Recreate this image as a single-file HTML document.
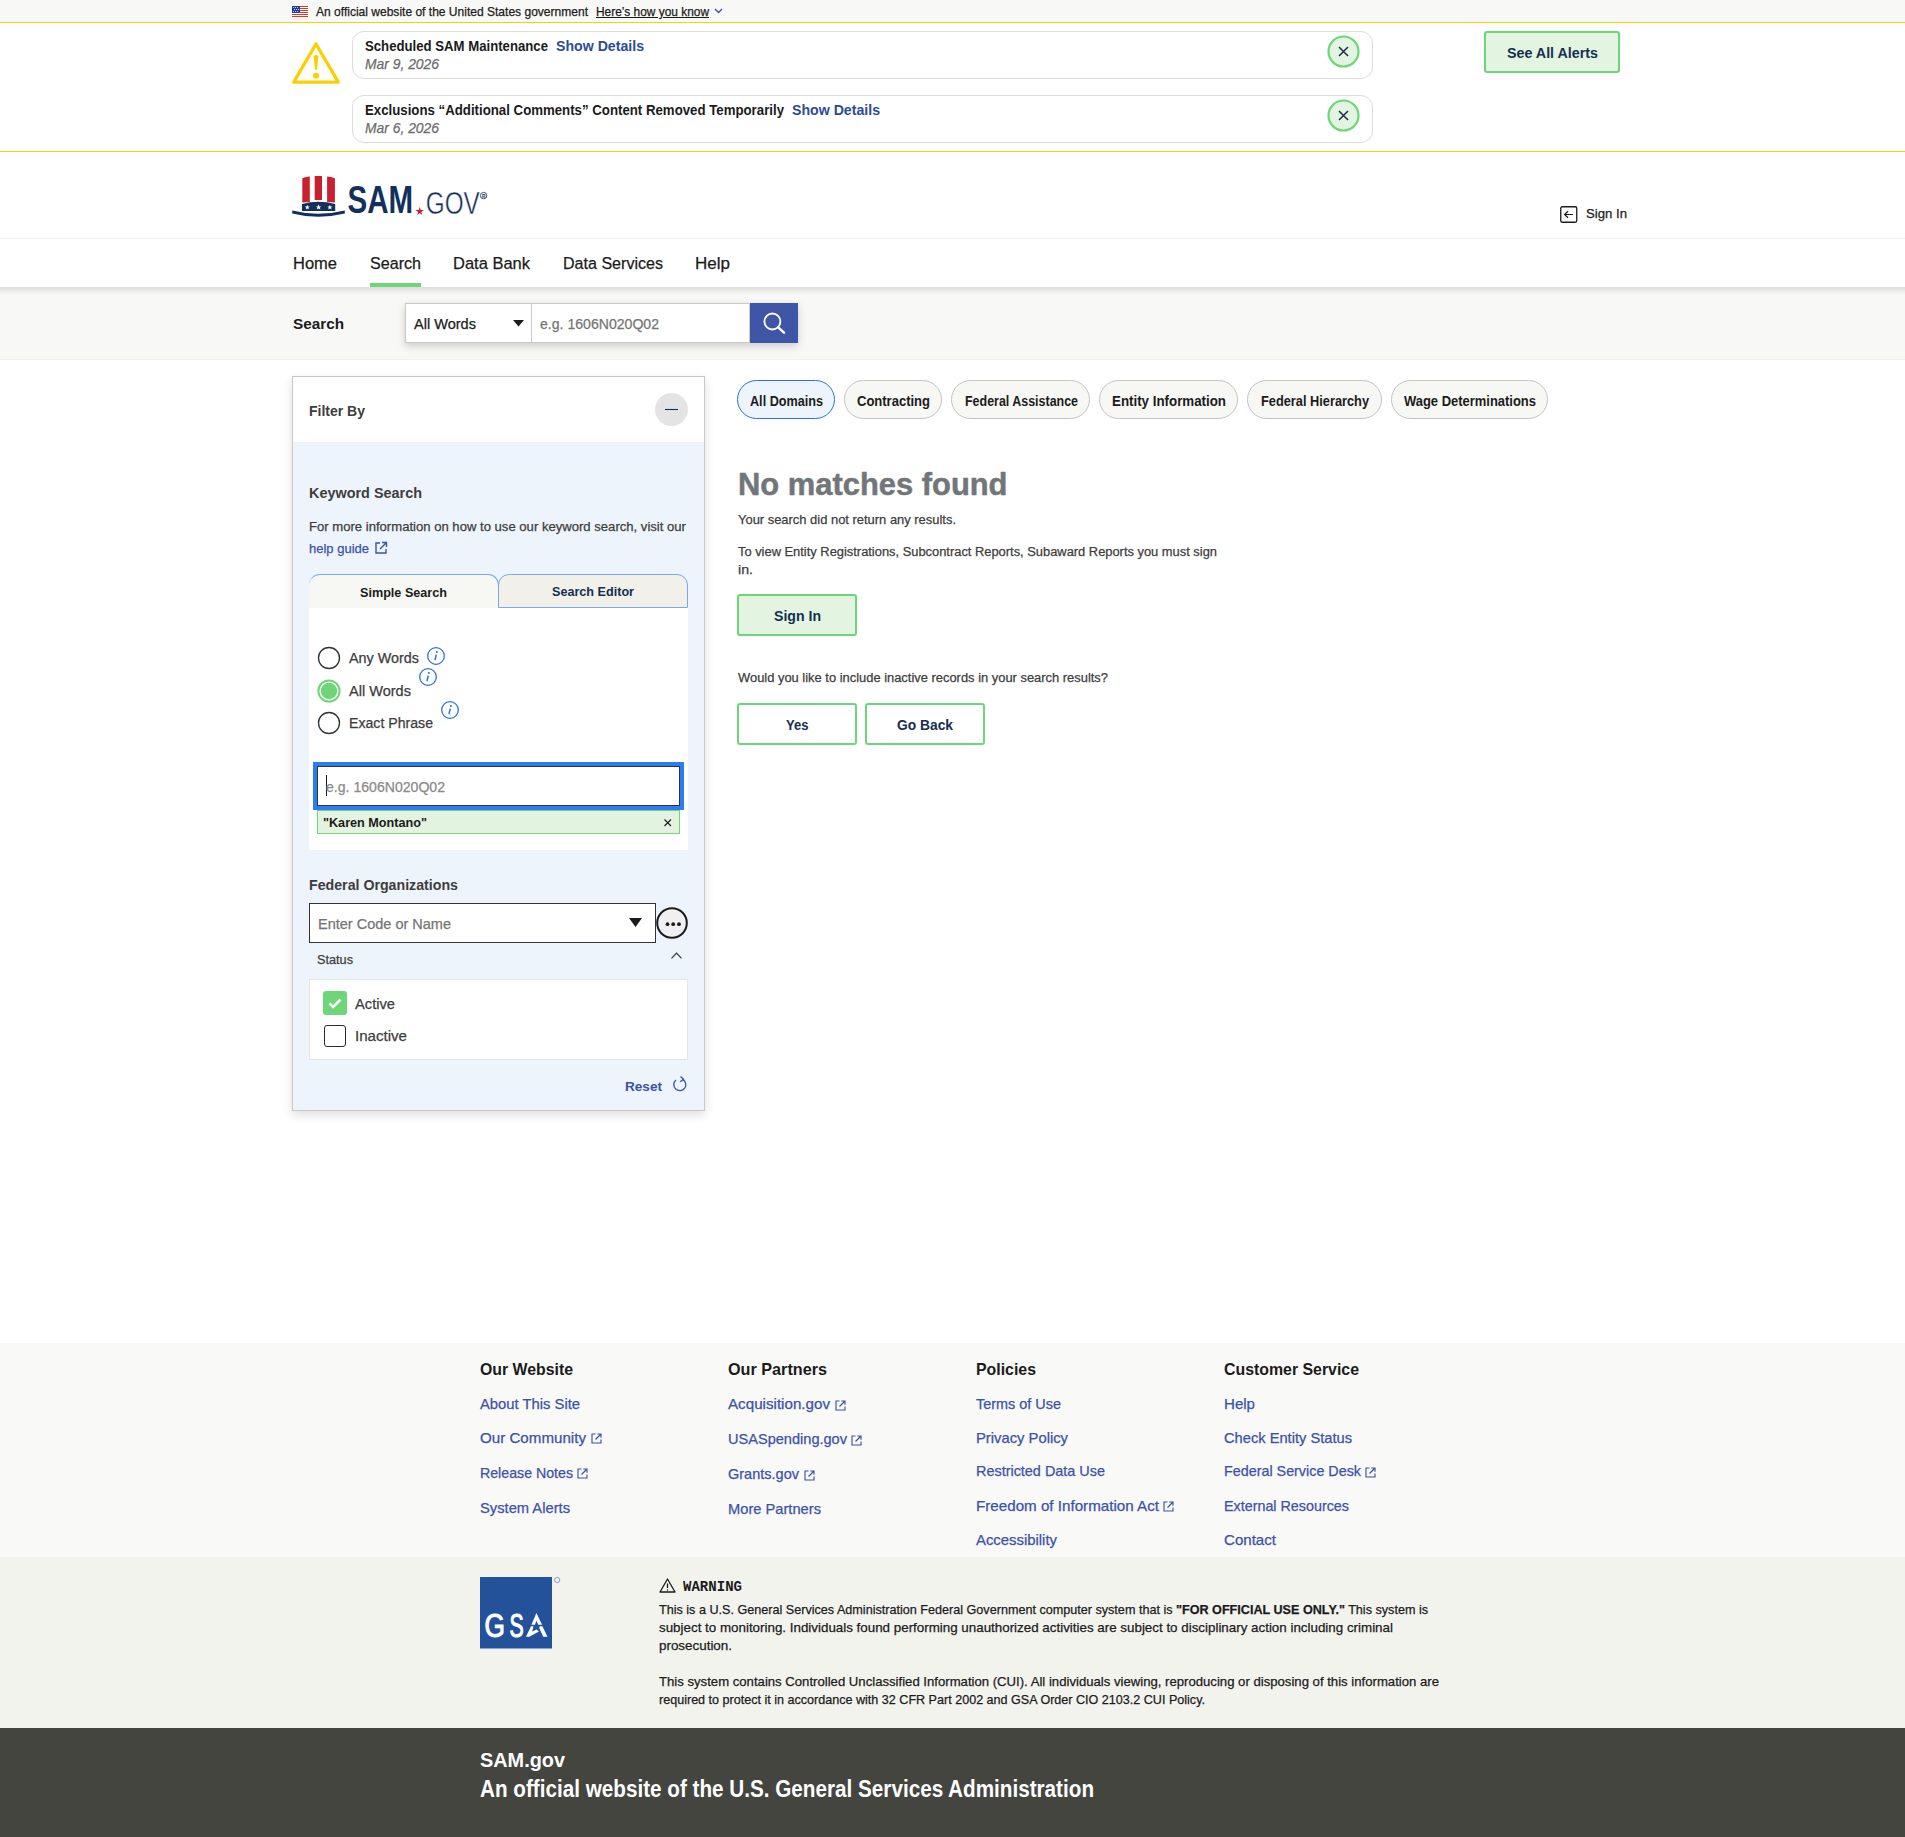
<!DOCTYPE html><html><head><meta charset="utf-8"><title>SAM.gov Search</title><style>
*{margin:0;padding:0;box-sizing:border-box}
html,body{width:1905px;height:1837px;overflow:hidden;background:#fff;font-family:"Liberation Sans",sans-serif;position:relative}
.t{position:absolute;line-height:1;white-space:nowrap}
.n{-webkit-text-stroke:0.25px currentColor}
.m{display:inline-block;width:0;height:0}
.b{position:absolute}
svg{position:absolute;overflow:visible}
</style></head><body>
<div class="b" style="left:0px;top:0px;width:1905px;height:22px;background:#f8f8f6"></div>
<div class="b" style="left:0px;top:22px;width:1905px;height:1px;background:#fbd000"></div>
<div class="b" style="left:0px;top:151px;width:1905px;height:1px;background:#fbd000"></div>
<div class="b" style="left:0px;top:238px;width:1905px;height:1px;background:#efefec"></div>
<div class="b" style="left:0px;top:287px;width:1905px;height:73px;background:#f8f8f6;border-bottom:1px solid #f1f1ed"></div>
<div class="b" style="left:0px;top:287px;width:1905px;height:8px;background:linear-gradient(#dcdcdb,#f8f8f6)"></div>
<div class="b" style="left:0px;top:1343px;width:1905px;height:214px;background:#f9f9f7"></div>
<div class="b" style="left:0px;top:1557px;width:1905px;height:171px;background:#f3f3ee"></div>
<div class="b" style="left:0px;top:1728px;width:1905px;height:109px;background:#45453f"></div>
<svg style="left:292px;top:6px" width="16" height="11" viewBox="0 0 16 11">
<rect width="16" height="11" fill="#fff"/>
<g fill="#d83b26"><rect y="0" width="16" height="1"/><rect y="2" width="16" height="1"/><rect y="4" width="16" height="1"/><rect y="6" width="16" height="1"/><rect y="8" width="16" height="1"/><rect y="10" width="16" height="1"/></g>
<rect width="8" height="7" fill="#1e3ca3"/>
<g fill="#fff"><circle cx="1.5" cy="1.5" r=".5"/><circle cx="3.5" cy="1.5" r=".5"/><circle cx="5.5" cy="1.5" r=".5"/><circle cx="2.5" cy="3.5" r=".5"/><circle cx="4.5" cy="3.5" r=".5"/><circle cx="6.5" cy="3.5" r=".5"/><circle cx="1.5" cy="5.5" r=".5"/><circle cx="3.5" cy="5.5" r=".5"/><circle cx="5.5" cy="5.5" r=".5"/></g>
</svg>
<div id="t0" class="t n " style="left:316px;top:6.012px;font-size:12.63px;font-weight:normal;color:#1b1b1b;font-style:normal;transform:scaleX(0.9530);transform-origin:0 0;">An official website of the United States government<i class="m"></i></div>
<div id="t1" class="t n " style="left:596px;top:6.012px;font-size:12.63px;font-weight:normal;color:#1b1b1b;font-style:normal;text-decoration:underline;transform:scaleX(0.9435);transform-origin:0 0;">Here’s how you know<i class="m"></i></div>
<svg style="left:714px;top:8px" width="9" height="6" viewBox="0 0 9 6"><path d="M1 1 L4.5 4.5 L8 1" fill="none" stroke="#3b52a8" stroke-width="1.4"/></svg>
<svg style="left:292px;top:42px" width="48" height="42" viewBox="0 0 48 42">
<path d="M24 2 L46.3 40.2 L1.7 40.2 Z" fill="none" stroke="#fbd000" stroke-width="3.3" stroke-linejoin="round"/>
<path d="M21.6 14.2 Q24 12 26.4 14.2 L25.1 27.3 Q24 28.5 22.9 27.3 Z" fill="#fbd000"/>
<circle cx="24" cy="33.7" r="3" fill="#fbd000"/>
</svg>
<div class="b" style="left:352px;top:31px;width:1021px;height:48px;border:1.5px solid #dcdcdc;border-radius:12px;background:#fff"></div>
<div id="t2" class="t " style="left:365px;top:38.606px;font-size:14.49px;font-weight:bold;color:#1b1b1b;font-style:normal;transform:scaleX(0.9095);transform-origin:0 0;">Scheduled SAM Maintenance<i class="m"></i></div>
<div id="t3" class="t " style="left:556px;top:38.612px;font-size:14.52px;font-weight:bold;color:#2c4b9a;font-style:normal;transform:scaleX(0.9741);transform-origin:0 0;">Show Details<i class="m"></i></div>
<div id="t4" class="t n " style="left:365px;top:55.613px;font-size:14.98px;font-weight:normal;color:#6b6b6b;font-style:italic;transform:scaleX(0.9263);transform-origin:0 0;">Mar 9, 2026<i class="m"></i></div>
<svg style="left:1327px;top:35px" width="33" height="33" viewBox="0 0 33 33">
<circle cx="16.5" cy="16.5" r="15" fill="#e3f5e1" stroke="#6dd679" stroke-width="2.2"/>
<path d="M12 12 L21 21 M21 12 L12 21" stroke="#1c2c4f" stroke-width="1.5"/>
</svg>
<div class="b" style="left:352px;top:95px;width:1021px;height:48px;border:1.5px solid #dcdcdc;border-radius:12px;background:#fff"></div>
<div id="t5" class="t " style="left:365px;top:102.606px;font-size:14.49px;font-weight:bold;color:#1b1b1b;font-style:normal;transform:scaleX(0.9139);transform-origin:0 0;">Exclusions “Additional Comments” Content Removed Temporarily<i class="m"></i></div>
<div id="t6" class="t " style="left:792px;top:102.612px;font-size:14.52px;font-weight:bold;color:#2c4b9a;font-style:normal;transform:scaleX(0.9741);transform-origin:0 0;">Show Details<i class="m"></i></div>
<div id="t7" class="t n " style="left:365px;top:119.613px;font-size:14.98px;font-weight:normal;color:#6b6b6b;font-style:italic;transform:scaleX(0.9263);transform-origin:0 0;">Mar 6, 2026<i class="m"></i></div>
<svg style="left:1327px;top:99px" width="33" height="33" viewBox="0 0 33 33">
<circle cx="16.5" cy="16.5" r="15" fill="#e3f5e1" stroke="#6dd679" stroke-width="2.2"/>
<path d="M12 12 L21 21 M21 12 L12 21" stroke="#1c2c4f" stroke-width="1.5"/>
</svg>
<div class="b" style="left:1484px;top:31px;width:136px;height:42px;border:2px solid #6dd679;border-radius:3px;background:#e3f5e1"></div>
<div id="t8" class="t " style="left:1507px;top:45.506px;font-size:14.52px;font-weight:bold;color:#162e51;font-style:normal;transform:scaleX(0.9836);transform-origin:0 0;">See All Alerts<i class="m"></i></div>
<svg style="left:288px;top:170px" width="210" height="52" viewBox="0 0 210 52">
<g fill="#c8202f">
<path d="M14.3 8.3 Q18 6.8 21.8 6.6 L21.8 32 L14.3 32.5 Z"/>
<path d="M26.7 6 L34 6 L34 30 L26.7 30 Z"/>
<path d="M39.1 6.6 Q43 6.8 46.9 8.3 L46.9 32.5 L39.1 32 Z"/>
</g>
<path d="M14 34 Q30.5 29.5 47.2 34 L47.2 41 L14 41 Z" fill="#12305a"/>
<g fill="#fff">
<path d="M19.3 34.8 L20 36.6 L21.8 36.6 L20.4 37.7 L20.9 39.4 L19.3 38.4 L17.7 39.4 L18.2 37.7 L16.8 36.6 L18.6 36.6 Z"/>
<path d="M30.6 34.3 L31.4 36.4 L33.5 36.4 L31.8 37.6 L32.4 39.6 L30.6 38.4 L28.8 39.6 L29.4 37.6 L27.7 36.4 L29.8 36.4 Z"/>
<path d="M41.9 34.8 L42.6 36.6 L44.4 36.6 L43 37.7 L43.5 39.4 L41.9 38.4 L40.3 39.4 L40.8 37.7 L39.4 36.6 L41.2 36.6 Z"/>
</g>
<path d="M4.2 40.5 Q30 47 56.8 40.5 L56.8 43.5 Q30 50 4.2 43.5 Z" fill="#12305a"/>
<text x="59.5" y="42.8" font-family="Liberation Sans" font-weight="bold" font-size="39.5" fill="#12305a" textLength="65.6" lengthAdjust="spacingAndGlyphs">SAM</text>
<path d="M131.7 37 L132.7 40 L135.9 40 L133.3 41.9 L134.3 44.9 L131.7 43 L129.1 44.9 L130.1 41.9 L127.5 40 L130.7 40 Z" fill="#c8202f"/>
<text x="137.8" y="43.8" font-family="Liberation Sans" font-size="31" fill="#12305a" textLength="54" lengthAdjust="spacingAndGlyphs" stroke="#fff" stroke-width="0.45">GOV</text>
<circle cx="195.6" cy="25.6" r="3.2" fill="none" stroke="#12305a" stroke-width="0.8"/>
<text x="193.9" y="27.5" font-family="Liberation Sans" font-size="5" font-weight="bold" fill="#12305a">R</text>
</svg>
<svg style="left:1560px;top:206px" width="18" height="17" viewBox="0 0 18 17">
<rect x="0.75" y="0.75" width="16" height="15.5" rx="1.5" fill="none" stroke="#1b1b1b" stroke-width="1.3"/>
<path d="M13 8.5 L5 8.5 M8 5.2 L4.6 8.5 L8 11.8" fill="none" stroke="#1b1b1b" stroke-width="1.2"/>
</svg>
<div id="t9" class="t n " style="left:1586px;top:207.008px;font-size:13.17px;font-weight:normal;color:#1b1b1b;font-style:normal;transform:scaleX(1.0008);transform-origin:0 0;">Sign In<i class="m"></i></div>
<div id="t10" class="t n " style="left:292.6px;top:256.013px;font-size:16.8px;font-weight:normal;color:#1b1b1b;font-style:normal;transform:scaleX(0.9829);transform-origin:0 0;">Home<i class="m"></i></div>
<div id="t11" class="t n " style="left:370px;top:256.013px;font-size:16.8px;font-weight:normal;color:#1b1b1b;font-style:normal;transform:scaleX(0.9592);transform-origin:0 0;">Search<i class="m"></i></div>
<div id="t12" class="t n " style="left:453px;top:256.013px;font-size:16.8px;font-weight:normal;color:#1b1b1b;font-style:normal;transform:scaleX(0.9827);transform-origin:0 0;">Data Bank<i class="m"></i></div>
<div id="t13" class="t n " style="left:563px;top:256.013px;font-size:16.8px;font-weight:normal;color:#1b1b1b;font-style:normal;transform:scaleX(0.9572);transform-origin:0 0;">Data Services<i class="m"></i></div>
<div id="t14" class="t n " style="left:695px;top:256.013px;font-size:16.8px;font-weight:normal;color:#1b1b1b;font-style:normal;transform:scaleX(1.0140);transform-origin:0 0;">Help<i class="m"></i></div>
<div class="b" style="left:370px;top:283px;width:51px;height:4px;background:#6dd679"></div>
<div id="t15" class="t " style="left:293px;top:316.010px;font-size:15.29px;font-weight:bold;color:#1b1b1b;font-style:normal;transform:scaleX(1.0003);transform-origin:0 0;">Search<i class="m"></i></div>
<div class="b" style="left:405px;top:303px;width:393px;height:40px;box-shadow:0 3px 8px rgba(0,0,0,0.18)"></div>
<div class="b" style="left:405px;top:303px;width:127px;height:40px;background:#fff;border:1px solid #c9c9c9"></div>
<div id="t16" class="t n " style="left:414px;top:317.012px;font-size:14.55px;font-weight:normal;color:#1b1b1b;font-style:normal;transform:scaleX(1.0003);transform-origin:0 0;">All Words<i class="m"></i></div>
<svg style="left:513px;top:320px" width="11" height="7" viewBox="0 0 11 7"><path d="M0 0 L11 0 L5.5 6.5 Z" fill="#1b1b1b"/></svg>
<div class="b" style="left:531px;top:303px;width:219px;height:40px;background:#fff;border:1px solid #c9c9c9"></div>
<div id="t17" class="t n " style="left:540px;top:317.003px;font-size:14.08px;font-weight:normal;color:#757575;font-style:normal;transform:scaleX(1.0001);transform-origin:0 0;">e.g. 1606N020Q02<i class="m"></i></div>
<div class="b" style="left:750px;top:303px;width:48px;height:40px;background:#3f56a6"></div>
<svg style="left:762px;top:311px" width="25" height="25" viewBox="0 0 25 25">
<circle cx="10.4" cy="10.5" r="8" fill="none" stroke="#fff" stroke-width="1.8"/>
<path d="M16.2 16.4 L22 21.6" stroke="#fff" stroke-width="2.5" stroke-linecap="round"/>
</svg>
<div class="b" style="left:292px;top:376px;width:413px;height:735px;border:1px solid #c8c8c8;background:#edf4fb;box-shadow:0 4px 10px rgba(0,0,0,0.13)"></div>
<div class="b" style="left:293px;top:377px;width:411px;height:65px;background:#fff"></div>
<div id="t18" class="t " style="left:309px;top:404.010px;font-size:14.7px;font-weight:bold;color:#3d3d3d;font-style:normal;transform:scaleX(0.9529);transform-origin:0 0;">Filter By<i class="m"></i></div>
<svg style="left:655px;top:393px" width="33" height="33" viewBox="0 0 33 33">
<circle cx="16.5" cy="16.5" r="16.5" fill="#e4e4e4"/>
<path d="M10 16.5 L23 16.5" stroke="#162e51" stroke-width="1.1"/>
</svg>
<div id="t19" class="t " style="left:309px;top:486.012px;font-size:14.42px;font-weight:bold;color:#3d3d3d;font-style:normal;transform:scaleX(1.0008);transform-origin:0 0;">Keyword Search<i class="m"></i></div>
<div id="t20" class="t n " style="left:309px;top:520.013px;font-size:13.09px;font-weight:normal;color:#3d3d3d;font-style:normal;transform:scaleX(1.0012);transform-origin:0 0;">For more information on how to use our keyword search, visit our<i class="m"></i></div>
<div id="t21" class="t n " style="left:309px;top:542.011px;font-size:13.0px;font-weight:normal;color:#3b52a8;font-style:normal;transform:scaleX(1.0000);transform-origin:0 0;">help guide<i class="m"></i></div>
<svg style="left:374px;top:541px" width="14" height="14" viewBox="0 0 14 14">
<path d="M6 2 L2 2 L2 12 L12 12 L12 8" fill="none" stroke="#3b52a8" stroke-width="1.4"/>
<path d="M8 1.5 L12.5 1.5 L12.5 6 M12.5 1.5 L6 8" fill="none" stroke="#3b52a8" stroke-width="1.4"/>
</svg>
<div class="b" style="left:309px;top:607px;width:379px;height:243px;background:#fff"></div>
<div class="b" style="left:309px;top:574px;width:190px;height:34px;background:#f7f7f4;border:1.2px solid #7aa7f2;border-bottom:none;border-left:none;border-radius:11px 11px 0 0"></div>
<div class="b" style="left:498px;top:574px;width:190px;height:34px;background:#f1f1ea;border:1.2px solid #7aa7f2;border-radius:11px 11px 0 0"></div>
<div id="t22" class="t " style="left:360px;top:586.808px;font-size:12.62px;font-weight:bold;color:#1b1b1b;font-style:normal;transform:scaleX(1.0011);transform-origin:0 0;">Simple Search<i class="m"></i></div>
<div id="t23" class="t " style="left:552px;top:586.013px;font-size:12.61px;font-weight:bold;color:#162e51;font-style:normal;transform:scaleX(1.0000);transform-origin:0 0;">Search Editor<i class="m"></i></div>
<svg style="left:317px;top:646px" width="24" height="24" viewBox="0 0 24 24"><circle cx="12" cy="12" r="10.5" fill="#fff" stroke="#333" stroke-width="1.35"/></svg>
<div id="t24" class="t n " style="left:349px;top:651.008px;font-size:14.37px;font-weight:normal;color:#3d3d3d;font-style:normal;transform:scaleX(1.0004);transform-origin:0 0;">Any Words<i class="m"></i></div>
<svg style="left:427px;top:647px" width="18" height="18" viewBox="0 0 18 18">
<circle cx="9" cy="9" r="8.3" fill="none" stroke="#2a72de" stroke-width="1.3"/>
<circle cx="9.9" cy="4.9" r="1" fill="#2a72de"/><path d="M9.2 7.6 L8 13.2" stroke="#2a72de" stroke-width="1.5"/>
</svg>
<svg style="left:317px;top:679px" width="24" height="24" viewBox="0 0 24 24"><circle cx="12" cy="12" r="10.6" fill="#fff" stroke="#6dd679" stroke-width="2"/><circle cx="12" cy="12" r="8.2" fill="#6dd679"/></svg>
<div id="t25" class="t n " style="left:349px;top:684.012px;font-size:14.55px;font-weight:normal;color:#3d3d3d;font-style:normal;transform:scaleX(1.0003);transform-origin:0 0;">All Words<i class="m"></i></div>
<svg style="left:419px;top:668px" width="18" height="18" viewBox="0 0 18 18">
<circle cx="9" cy="9" r="8.3" fill="none" stroke="#2a72de" stroke-width="1.3"/>
<circle cx="9.9" cy="4.9" r="1" fill="#2a72de"/><path d="M9.2 7.6 L8 13.2" stroke="#2a72de" stroke-width="1.5"/>
</svg>
<svg style="left:317px;top:711px" width="24" height="24" viewBox="0 0 24 24"><circle cx="12" cy="12" r="10.5" fill="#fff" stroke="#333" stroke-width="1.35"/></svg>
<div id="t26" class="t n " style="left:349px;top:716.001px;font-size:14.12px;font-weight:normal;color:#3d3d3d;font-style:normal;transform:scaleX(1.0009);transform-origin:0 0;">Exact Phrase<i class="m"></i></div>
<svg style="left:441px;top:701px" width="18" height="18" viewBox="0 0 18 18">
<circle cx="9" cy="9" r="8.3" fill="none" stroke="#2a72de" stroke-width="1.3"/>
<circle cx="9.9" cy="4.9" r="1" fill="#2a72de"/><path d="M9.2 7.6 L8 13.2" stroke="#2a72de" stroke-width="1.5"/>
</svg>
<div class="b" style="left:313px;top:762px;width:371px;height:48px;border:4px solid #2a7ef2"></div>
<div class="b" style="left:317px;top:766px;width:363px;height:40px;border:1.5px solid #333;background:#fff"></div>
<div class="b" style="left:326px;top:775px;width:1px;height:21px;background:#1b1b1b"></div>
<div id="t27" class="t n " style="left:326px;top:780.003px;font-size:14.08px;font-weight:normal;color:#8a8a8a;font-style:normal;transform:scaleX(1.0001);transform-origin:0 0;">e.g. 1606N020Q02<i class="m"></i></div>
<div class="b" style="left:317px;top:810px;width:363px;height:24px;background:#e3f3e0;border:1px solid #6dd679"></div>
<div id="t28" class="t " style="left:323px;top:817.003px;font-size:12.64px;font-weight:bold;color:#1b1b1b;font-style:normal;transform:scaleX(1.0014);transform-origin:0 0;">"Karen Montano"<i class="m"></i></div>
<svg style="left:662.5px;top:818px" width="10" height="10" viewBox="0 0 10 10"><path d="M1.5 1.5 L8 8 M8 1.5 L1.5 8" stroke="#1b1b1b" stroke-width="1.1"/></svg>
<div id="t29" class="t " style="left:309px;top:878.004px;font-size:14.19px;font-weight:bold;color:#3d3d3d;font-style:normal;transform:scaleX(0.9999);transform-origin:0 0;">Federal Organizations<i class="m"></i></div>
<div class="b" style="left:309px;top:903px;width:347px;height:40px;border:1.5px solid #333;background:#fff"></div>
<div id="t30" class="t n " style="left:318px;top:917.007px;font-size:14.5px;font-weight:normal;color:#757575;font-style:normal;transform:scaleX(1.0001);transform-origin:0 0;">Enter Code or Name<i class="m"></i></div>
<svg style="left:629px;top:918px" width="13" height="9" viewBox="0 0 13 9"><path d="M0 0 L13 0 L6.5 9 Z" fill="#1b1b1b"/></svg>
<svg style="left:656px;top:907px" width="32" height="32" viewBox="0 0 32 32">
<circle cx="16" cy="16" r="14.8" fill="#f0f0f0" stroke="#1b1b1b" stroke-width="2"/>
<circle cx="11.5" cy="17.2" r="1.9" fill="#1b1b1b"/><circle cx="17.2" cy="17.2" r="1.9" fill="#1b1b1b"/><circle cx="23" cy="17.2" r="1.9" fill="#1b1b1b"/>
</svg>
<div id="t31" class="t n " style="left:317px;top:954.015px;font-size:12.7px;font-weight:normal;color:#3d3d3d;font-style:normal;transform:scaleX(1.0009);transform-origin:0 0;">Status<i class="m"></i></div>
<svg style="left:670px;top:951px" width="13" height="8" viewBox="0 0 13 8"><path d="M1.5 7.3 L6.5 2 L11.5 7.3" fill="none" stroke="#333" stroke-width="1.15"/></svg>
<div class="b" style="left:309px;top:979px;width:379px;height:81px;background:#fff;border:1.5px solid #e6e6e6"></div>
<svg style="left:323px;top:991px" width="24" height="24" viewBox="0 0 24 24">
<rect width="24" height="24" rx="3" fill="#6dd679"/>
<path d="M6.5 12.5 L10.2 16 L17.5 8.5" fill="none" stroke="#fff" stroke-width="2.6"/>
</svg>
<div id="t32" class="t n " style="left:355px;top:997.002px;font-size:14.69px;font-weight:normal;color:#3d3d3d;font-style:normal;transform:scaleX(1.0000);transform-origin:0 0;">Active<i class="m"></i></div>
<div class="b" style="left:324px;top:1025px;width:22px;height:22px;border:1.6px solid #2b2b2b;border-radius:3px;background:#fff"></div>
<div id="t33" class="t n " style="left:355px;top:1028.008px;font-size:15.09px;font-weight:normal;color:#3d3d3d;font-style:normal;transform:scaleX(1.0006);transform-origin:0 0;">Inactive<i class="m"></i></div>
<div id="t34" class="t " style="left:625px;top:1079.505px;font-size:13.58px;font-weight:bold;color:#3b52a8;font-style:normal;transform:scaleX(1.0004);transform-origin:0 0;">Reset<i class="m"></i></div>
<svg style="left:672px;top:1076px" width="16" height="17" viewBox="0 0 16 17">
<path d="M10.5 3.3 A6 6 0 1 1 4 4" fill="none" stroke="#3b52a8" stroke-width="1.3"/>
<path d="M8.5 0.5 L11.5 3.3 L8.2 5.8" fill="none" stroke="#3b52a8" stroke-width="1.3"/>
</svg>
<div class="b" style="left:737px;top:380px;width:98px;height:39px;border:1.3px solid #2a72de;border-radius:20px;background:#edf4fb"></div>
<div id="t35" class="t " style="left:750px;top:394.612px;font-size:13.8px;font-weight:bold;color:#1b1b1b;font-style:normal;transform:scaleX(0.9155);transform-origin:0 0;">All Domains<i class="m"></i></div>
<div class="b" style="left:844px;top:380px;width:98px;height:39px;border:1px solid #c4c4c4;border-radius:20px;background:#f7f7f4"></div>
<div id="t36" class="t " style="left:857.3px;top:394.612px;font-size:13.8px;font-weight:bold;color:#1b1b1b;font-style:normal;transform:scaleX(0.9429);transform-origin:0 0;">Contracting<i class="m"></i></div>
<div class="b" style="left:951px;top:380px;width:139px;height:39px;border:1px solid #c4c4c4;border-radius:20px;background:#f7f7f4"></div>
<div id="t37" class="t " style="left:964.5px;top:394.612px;font-size:13.8px;font-weight:bold;color:#1b1b1b;font-style:normal;transform:scaleX(0.9021);transform-origin:0 0;">Federal Assistance<i class="m"></i></div>
<div class="b" style="left:1099px;top:380px;width:139px;height:39px;border:1px solid #c4c4c4;border-radius:20px;background:#f7f7f4"></div>
<div id="t38" class="t " style="left:1111.7px;top:394.612px;font-size:13.8px;font-weight:bold;color:#1b1b1b;font-style:normal;transform:scaleX(0.9657);transform-origin:0 0;">Entity Information<i class="m"></i></div>
<div class="b" style="left:1247px;top:380px;width:135px;height:39px;border:1px solid #c4c4c4;border-radius:20px;background:#f7f7f4"></div>
<div id="t39" class="t " style="left:1260.7px;top:394.612px;font-size:13.8px;font-weight:bold;color:#1b1b1b;font-style:normal;transform:scaleX(0.9264);transform-origin:0 0;">Federal Hierarchy<i class="m"></i></div>
<div class="b" style="left:1391px;top:380px;width:157px;height:39px;border:1px solid #c4c4c4;border-radius:20px;background:#f7f7f4"></div>
<div id="t40" class="t " style="left:1403.8px;top:394.612px;font-size:13.8px;font-weight:bold;color:#1b1b1b;font-style:normal;transform:scaleX(0.9391);transform-origin:0 0;">Wage Determinations<i class="m"></i></div>
<div id="t41" class="t " style="left:738px;top:468.601px;font-size:31.33px;font-weight:bold;color:#71767a;font-style:normal;-webkit-text-stroke:0.5px currentColor;transform:scaleX(0.9862);transform-origin:0 0;">No matches found<i class="m"></i></div>
<div id="t42" class="t n " style="left:738px;top:514.008px;font-size:12.93px;font-weight:normal;color:#3d3d3d;font-style:normal;transform:scaleX(1.0005);transform-origin:0 0;">Your search did not return any results.<i class="m"></i></div>
<div id="t43" class="t n " style="left:738px;top:546.003px;font-size:12.88px;font-weight:normal;color:#3d3d3d;font-style:normal;transform:scaleX(1.0005);transform-origin:0 0;">To view Entity Registrations, Subcontract Reports, Subaward Reports you must sign<i class="m"></i></div>
<div id="t44" class="t n " style="left:738px;top:563.502px;font-size:12.9px;font-weight:normal;color:#3d3d3d;font-style:normal;transform:scaleX(1.1009);transform-origin:0 0;">in.<i class="m"></i></div>
<div class="b" style="left:737px;top:594px;width:120px;height:42px;border:2px solid #6dd679;border-radius:3px;background:#e3f5e1"></div>
<div id="t45" class="t " style="left:773.5px;top:609.002px;font-size:14.1px;font-weight:bold;color:#162e51;font-style:normal;transform:scaleX(1.0003);transform-origin:0 0;">Sign In<i class="m"></i></div>
<div id="t46" class="t n " style="left:738px;top:672.009px;font-size:12.91px;font-weight:normal;color:#3d3d3d;font-style:normal;transform:scaleX(1.0002);transform-origin:0 0;">Would you like to include inactive records in your search results?<i class="m"></i></div>
<div class="b" style="left:737px;top:703px;width:120px;height:42px;border:2px solid #6dd679;border-radius:3px;background:#fff"></div>
<div id="t47" class="t " style="left:786px;top:718.002px;font-size:14.1px;font-weight:bold;color:#162e51;font-style:normal;transform:scaleX(0.9254);transform-origin:0 0;">Yes<i class="m"></i></div>
<div class="b" style="left:865px;top:703px;width:120px;height:42px;border:2px solid #6dd679;border-radius:3px;background:#fff"></div>
<div id="t48" class="t " style="left:897px;top:719.006px;font-size:13.8px;font-weight:bold;color:#162e51;font-style:normal;transform:scaleX(1.0003);transform-origin:0 0;">Go Back<i class="m"></i></div>
<div id="t49" class="t " style="left:480px;top:1362.009px;font-size:15.9px;font-weight:bold;color:#1b1b1b;font-style:normal;transform:scaleX(0.9967);transform-origin:0 0;">Our Website<i class="m"></i></div>
<div id="t50" class="t n " style="left:480px;top:1397.000px;font-size:14.6px;font-weight:normal;color:#3b52a8;font-style:normal;transform:scaleX(1.0131);transform-origin:0 0;">About This Site<i class="m"></i></div>
<div id="t51" class="t n " style="left:480px;top:1430.607px;font-size:14.6px;font-weight:normal;color:#3b52a8;font-style:normal;transform:scaleX(1.0373);transform-origin:0 0;">Our Community<i class="m"></i></div>
<svg style="left:590.5px;top:1432.5px" width="11" height="11" viewBox="0 0 11 11">
<path d="M4.5 1 L1 1 L1 10 L10 10 L10 6.5" fill="none" stroke="#3b52a8" stroke-width="1.15"/>
<path d="M6.3 1 L10 1 L10 4.7 M10 1 L4.5 6.5" fill="none" stroke="#3b52a8" stroke-width="1.15"/>
</svg>
<div id="t52" class="t n " style="left:480px;top:1466.304px;font-size:14.6px;font-weight:normal;color:#3b52a8;font-style:normal;transform:scaleX(0.9714);transform-origin:0 0;">Release Notes<i class="m"></i></div>
<svg style="left:577px;top:1468px" width="11" height="11" viewBox="0 0 11 11">
<path d="M4.5 1 L1 1 L1 10 L10 10 L10 6.5" fill="none" stroke="#3b52a8" stroke-width="1.15"/>
<path d="M6.3 1 L10 1 L10 4.7 M10 1 L4.5 6.5" fill="none" stroke="#3b52a8" stroke-width="1.15"/>
</svg>
<div id="t53" class="t n " style="left:480px;top:1501.000px;font-size:14.6px;font-weight:normal;color:#3b52a8;font-style:normal;transform:scaleX(1.0088);transform-origin:0 0;">System Alerts<i class="m"></i></div>
<div id="t54" class="t " style="left:728px;top:1362.009px;font-size:15.9px;font-weight:bold;color:#1b1b1b;font-style:normal;transform:scaleX(1.0190);transform-origin:0 0;">Our Partners<i class="m"></i></div>
<div id="t55" class="t n " style="left:728px;top:1397.000px;font-size:14.6px;font-weight:normal;color:#3b52a8;font-style:normal;transform:scaleX(1.0390);transform-origin:0 0;">Acquisition.gov<i class="m"></i></div>
<svg style="left:834.5px;top:1400px" width="11" height="11" viewBox="0 0 11 11">
<path d="M4.5 1 L1 1 L1 10 L10 10 L10 6.5" fill="none" stroke="#3b52a8" stroke-width="1.15"/>
<path d="M6.3 1 L10 1 L10 4.7 M10 1 L4.5 6.5" fill="none" stroke="#3b52a8" stroke-width="1.15"/>
</svg>
<div id="t56" class="t n " style="left:728px;top:1432.000px;font-size:14.6px;font-weight:normal;color:#3b52a8;font-style:normal;transform:scaleX(0.9978);transform-origin:0 0;">USASpending.gov<i class="m"></i></div>
<svg style="left:851px;top:1434.5px" width="11" height="11" viewBox="0 0 11 11">
<path d="M4.5 1 L1 1 L1 10 L10 10 L10 6.5" fill="none" stroke="#3b52a8" stroke-width="1.15"/>
<path d="M6.3 1 L10 1 L10 4.7 M10 1 L4.5 6.5" fill="none" stroke="#3b52a8" stroke-width="1.15"/>
</svg>
<div id="t57" class="t n " style="left:728px;top:1467.000px;font-size:14.6px;font-weight:normal;color:#3b52a8;font-style:normal;transform:scaleX(0.9945);transform-origin:0 0;">Grants.gov<i class="m"></i></div>
<svg style="left:804px;top:1469.5px" width="11" height="11" viewBox="0 0 11 11">
<path d="M4.5 1 L1 1 L1 10 L10 10 L10 6.5" fill="none" stroke="#3b52a8" stroke-width="1.15"/>
<path d="M6.3 1 L10 1 L10 4.7 M10 1 L4.5 6.5" fill="none" stroke="#3b52a8" stroke-width="1.15"/>
</svg>
<div id="t58" class="t n " style="left:728px;top:1502.000px;font-size:14.6px;font-weight:normal;color:#3b52a8;font-style:normal;transform:scaleX(1.0057);transform-origin:0 0;">More Partners<i class="m"></i></div>
<div id="t59" class="t " style="left:976px;top:1362.009px;font-size:15.9px;font-weight:bold;color:#1b1b1b;font-style:normal;transform:scaleX(0.9987);transform-origin:0 0;">Policies<i class="m"></i></div>
<div id="t60" class="t n " style="left:976px;top:1397.000px;font-size:14.6px;font-weight:normal;color:#3b52a8;font-style:normal;transform:scaleX(0.9887);transform-origin:0 0;">Terms of Use<i class="m"></i></div>
<div id="t61" class="t n " style="left:976px;top:1431.000px;font-size:14.6px;font-weight:normal;color:#3b52a8;font-style:normal;transform:scaleX(1.0129);transform-origin:0 0;">Privacy Policy<i class="m"></i></div>
<div id="t62" class="t n " style="left:976px;top:1464.000px;font-size:14.6px;font-weight:normal;color:#3b52a8;font-style:normal;transform:scaleX(0.9878);transform-origin:0 0;">Restricted Data Use<i class="m"></i></div>
<div id="t63" class="t n " style="left:976px;top:1498.607px;font-size:14.6px;font-weight:normal;color:#3b52a8;font-style:normal;transform:scaleX(1.0397);transform-origin:0 0;">Freedom of Information Act<i class="m"></i></div>
<svg style="left:1163px;top:1500.5px" width="11" height="11" viewBox="0 0 11 11">
<path d="M4.5 1 L1 1 L1 10 L10 10 L10 6.5" fill="none" stroke="#3b52a8" stroke-width="1.15"/>
<path d="M6.3 1 L10 1 L10 4.7 M10 1 L4.5 6.5" fill="none" stroke="#3b52a8" stroke-width="1.15"/>
</svg>
<div id="t64" class="t n " style="left:976px;top:1533.000px;font-size:14.6px;font-weight:normal;color:#3b52a8;font-style:normal;transform:scaleX(1.0191);transform-origin:0 0;">Accessibility<i class="m"></i></div>
<div id="t65" class="t " style="left:1224px;top:1362.009px;font-size:15.9px;font-weight:bold;color:#1b1b1b;font-style:normal;transform:scaleX(0.9990);transform-origin:0 0;">Customer Service<i class="m"></i></div>
<div id="t66" class="t n " style="left:1224px;top:1397.000px;font-size:14.6px;font-weight:normal;color:#3b52a8;font-style:normal;transform:scaleX(1.0328);transform-origin:0 0;">Help<i class="m"></i></div>
<div id="t67" class="t n " style="left:1224px;top:1431.000px;font-size:14.6px;font-weight:normal;color:#3b52a8;font-style:normal;transform:scaleX(1.0050);transform-origin:0 0;">Check Entity Status<i class="m"></i></div>
<div id="t68" class="t n " style="left:1224px;top:1464.000px;font-size:14.6px;font-weight:normal;color:#3b52a8;font-style:normal;transform:scaleX(0.9820);transform-origin:0 0;">Federal Service Desk<i class="m"></i></div>
<svg style="left:1365px;top:1467px" width="11" height="11" viewBox="0 0 11 11">
<path d="M4.5 1 L1 1 L1 10 L10 10 L10 6.5" fill="none" stroke="#3b52a8" stroke-width="1.15"/>
<path d="M6.3 1 L10 1 L10 4.7 M10 1 L4.5 6.5" fill="none" stroke="#3b52a8" stroke-width="1.15"/>
</svg>
<div id="t69" class="t n " style="left:1224px;top:1499.000px;font-size:14.6px;font-weight:normal;color:#3b52a8;font-style:normal;transform:scaleX(0.9815);transform-origin:0 0;">External Resources<i class="m"></i></div>
<div id="t70" class="t n " style="left:1224px;top:1533.000px;font-size:14.6px;font-weight:normal;color:#3b52a8;font-style:normal;transform:scaleX(1.0339);transform-origin:0 0;">Contact<i class="m"></i></div>
<svg style="left:480px;top:1577px" width="82" height="72" viewBox="0 0 82 72">
<rect width="72" height="71.5" fill="#23529a"/>
<text x="4.6" y="60" font-family="Liberation Sans" font-size="33.5" fill="#fff" stroke="#fff" stroke-width="1.1" textLength="20.4" lengthAdjust="spacingAndGlyphs">G</text>
<text x="29.6" y="60" font-family="Liberation Sans" font-size="33.5" fill="#fff" stroke="#fff" stroke-width="1.1" textLength="14.2" lengthAdjust="spacingAndGlyphs">S</text>
<path fill="#fff" fill-rule="evenodd" d="M51.4 47.8 L56.4 36 L62.1 47.8 Z M55 47.8 L56.4 43.8 L58.3 47.8 Z"/>
<path fill="#fff" d="M59.7 49.2 L62.4 49.2 L67.5 59.8 L63.3 59.8 L59.2 51 Z M46 59.8 L51 49.2 L53.5 49.2 L52.2 54.4 L56.4 52.6 L59 54.4 L49.3 59.8 Z"/>
<circle cx="77.2" cy="3" r="2.6" fill="none" stroke="#5b7bb5" stroke-width="0.7"/>
</svg>
<svg style="left:659px;top:1578px" width="17" height="15" viewBox="0 0 17 15">
<path d="M8.5 1 L16 14 L1 14 Z" fill="none" stroke="#1b1b1b" stroke-width="1.3" stroke-linejoin="round"/>
<path d="M8.5 5.5 L8.5 10" stroke="#1b1b1b" stroke-width="1.3"/><circle cx="8.5" cy="12" r=".7" fill="#1b1b1b"/>
</svg>
<div id="t71" class="t " style="left:683px;top:1579.504px;font-size:15.5px;font-weight:bold;color:#1b1b1b;font-style:normal;font-family:'Liberation Mono',monospace;transform:scaleX(0.9060);transform-origin:0 0;">WARNING<i class="m"></i></div>
<div id="t72" class="t n " style="left:659px;top:1602.613px;font-size:13.3px;font-weight:normal;color:#1b1b1b;font-style:normal;transform:scaleX(0.9480);transform-origin:0 0;">This is a U.S. General Services Administration Federal Government computer system that is <b>"FOR OFFICIAL USE ONLY."</b> This system is<i class="m"></i></div>
<div id="t73" class="t n " style="left:659px;top:1620.601px;font-size:13.37px;font-weight:normal;color:#1b1b1b;font-style:normal;transform:scaleX(1.0004);transform-origin:0 0;">subject to monitoring. Individuals found performing unauthorized activities are subject to disciplinary action including criminal<i class="m"></i></div>
<div id="t74" class="t n " style="left:659px;top:1638.613px;font-size:13.3px;font-weight:normal;color:#1b1b1b;font-style:normal;transform:scaleX(1.0075);transform-origin:0 0;">prosecution.<i class="m"></i></div>
<div id="t75" class="t n " style="left:659px;top:1674.707px;font-size:13.13px;font-weight:normal;color:#1b1b1b;font-style:normal;transform:scaleX(1.0011);transform-origin:0 0;">This system contains Controlled Unclassified Information (CUI). All individuals viewing, reproducing or disposing of this information are<i class="m"></i></div>
<div id="t76" class="t n " style="left:659px;top:1693.714px;font-size:12.55px;font-weight:normal;color:#1b1b1b;font-style:normal;transform:scaleX(1.0016);transform-origin:0 0;">required to protect it in accordance with 32 CFR Part 2002 and GSA Order CIO 2103.2 CUI Policy.<i class="m"></i></div>
<div id="t77" class="t " style="left:480px;top:1748.804px;font-size:21.06px;font-weight:bold;color:#fff;font-style:normal;transform:scaleX(0.9440);transform-origin:0 0;">SAM.gov<i class="m"></i></div>
<div id="t78" class="t " style="left:480px;top:1778.314px;font-size:23.54px;font-weight:bold;color:#fff;font-style:normal;transform:scaleX(0.8788);transform-origin:0 0;">An official website of the U.S. General Services Administration<i class="m"></i></div>
</body></html>
